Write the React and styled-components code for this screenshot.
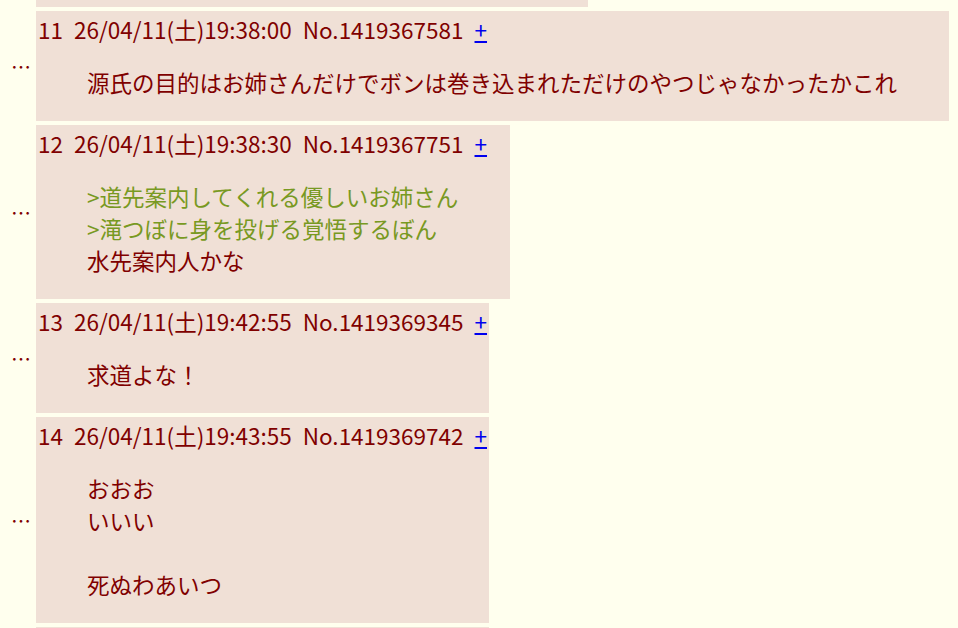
import React, { useLayoutEffect, useRef } from 'react';
import styled, { createGlobalStyle } from 'styled-components';

const GlobalStyle = createGlobalStyle`
  html, body {
    margin: 0;
    padding: 0;
    background: #ffffee;
    overflow: hidden;
  }
  body {
    font-family: "Noto Sans CJK JP", "Noto Sans", sans-serif;
    color: #800000;
  }
`;

const Page = styled.div`
  height: 100vh;
  overflow: hidden;
  padding: 0 8px;
  box-sizing: border-box;
`;

const Thread = styled.div`
  display: flex;
  flex-direction: column;
  align-items: flex-start;
  gap: 4px;
`;

const Row = styled.div`
  display: flex;
  align-items: center;
  gap: 2px;
  max-width: 100%;
`;

const Marker = styled.div`
  flex: 0 0 26px;
  text-align: center;
  font-size: 20px;
  color: #800000;
`;

const Reply = styled.div`
  background: #f0e0d6;
  padding: 2px;
  font-size: 22.5px;
  line-height: 32px;
  min-width: 0;
`;

const Head = styled.div`
  display: flex;
  align-items: baseline;
  gap: 11px;
  white-space: nowrap;
`;

const Del = styled.a`
  color: #0000ee;
  text-decoration: underline;
  cursor: pointer;
`;

const Body = styled.blockquote`
  margin: 21px 50px 21px 49px;
`;

const Line = styled.div`
  min-height: 32px;
  color: ${(p) => (p.$quote ? '#789922' : '#800000')};
`;

const posts = [
  { no: 10, date: '26/04/11(土)19:37:21', id: '1419367302', lines: ['優しいお姉さんに案内されて滝に落ちるぼん'] },
  { no: 11, date: '26/04/11(土)19:38:00', id: '1419367581', lines: ['源氏の目的はお姉さんだけでボンは巻き込まれただけのやつじゃなかったかこれ'] },
  {
    no: 12,
    date: '26/04/11(土)19:38:30',
    id: '1419367751',
    lines: ['>道先案内してくれる優しいお姉さん', '>滝つぼに身を投げる覚悟するぼん', '水先案内人かな'],
  },
  { no: 13, date: '26/04/11(土)19:42:55', id: '1419369345', lines: ['求道よな！'] },
  { no: 14, date: '26/04/11(土)19:43:55', id: '1419369742', lines: ['おおお', 'いいい', '', '死ぬわあいつ'] },
  { no: 15, date: '26/04/11(土)19:44:31', id: '1419370018', lines: ['滝つぼは勘弁して'] },
];

function Post({ post, rowRef }) {
  return (
    <Row ref={rowRef}>
      <Marker>…</Marker>
      <Reply>
        <Head>
          <span>{post.no}</span>
          <span>{post.date}</span>
          <span>No.{post.id}</span>
          <Del>+</Del>
        </Head>
        <Body>
          {post.lines.map((line, i) => (
            <Line key={i} $quote={line.startsWith('>')}>
              {line}
            </Line>
          ))}
        </Body>
      </Reply>
    </Row>
  );
}

export default function App() {
  const pageRef = useRef(null);
  const anchorRef = useRef(null);

  // the capture is scrolled so that No.11 sits just below the top edge
  useLayoutEffect(() => {
    const page = pageRef.current;
    const anchor = anchorRef.current;
    if (!page || !anchor) return;
    const offset = anchor.getBoundingClientRect().top - page.getBoundingClientRect().top;
    page.scrollTop += offset - 11;
  }, []);

  return (
    <>
      <GlobalStyle />
      <Page ref={pageRef}>
        <Thread>
          {posts.map((post) => (
            <Post key={post.no} post={post} rowRef={post.no === 11 ? anchorRef : undefined} />
          ))}
        </Thread>
      </Page>
    </>
  );
}
